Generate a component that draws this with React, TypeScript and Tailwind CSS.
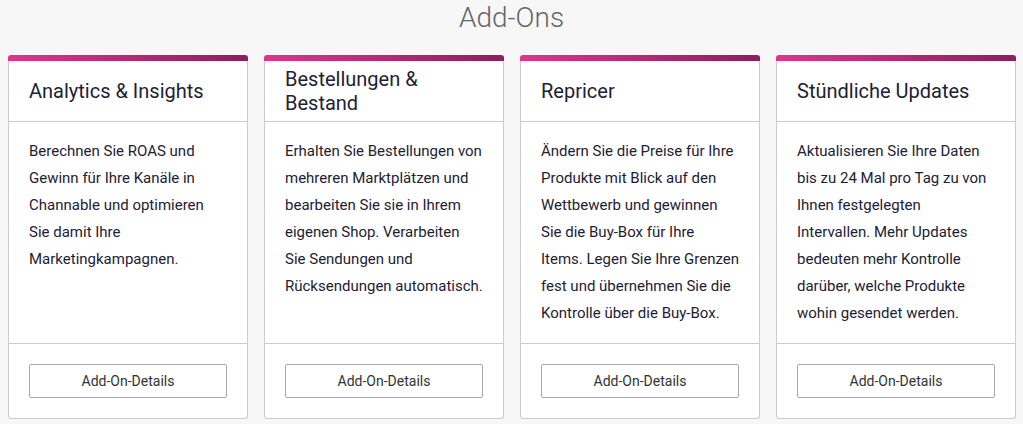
import React from "react";

const cards = [
  {
    title: "Analytics & Insights",
    lines: [
      "Berechnen Sie ROAS und",
      "Gewinn für Ihre Kanäle in",
      "Channable und optimieren",
      "Sie damit Ihre",
      "Marketingkampagnen.",
    ],
  },
  {
    title: "Bestellungen & Bestand",
    lines: [
      "Erhalten Sie Bestellungen von",
      "mehreren Marktplätzen und",
      "bearbeiten Sie sie in Ihrem",
      "eigenen Shop. Verarbeiten",
      "Sie Sendungen und",
      "Rücksendungen automatisch.",
    ],
  },
  {
    title: "Repricer",
    lines: [
      "Ändern Sie die Preise für Ihre",
      "Produkte mit Blick auf den",
      "Wettbewerb und gewinnen",
      "Sie die Buy-Box für Ihre",
      "Items. Legen Sie Ihre Grenzen",
      "fest und übernehmen Sie die",
      "Kontrolle über die Buy-Box.",
    ],
  },
  {
    title: "Stündliche Updates",
    lines: [
      "Aktualisieren Sie Ihre Daten",
      "bis zu 24 Mal pro Tag zu von",
      "Ihnen festgelegten",
      "Intervallen. Mehr Updates",
      "bedeuten mehr Kontrolle",
      "darüber, welche Produkte",
      "wohin gesendet werden.",
    ],
  },
];

export default function App() {
  return (
    <div
      className="min-h-[424px] w-full bg-[#f7f7f7] px-2"
      style={{ fontFamily: "Roboto, 'Noto Sans', sans-serif" }}
    >
      <h1 className="h-[36px] text-center text-[28px] font-light leading-[36px] text-[#666666]">
        Add-Ons
      </h1>
      <div className="mt-[19px] grid grid-cols-[repeat(4,240px)] gap-4">
        {cards.map((c) => (
          <div key={c.title} className="flex flex-col">
            <div className="h-[6px] rounded-t-[3px] bg-gradient-to-r from-[#e0358b] to-[#8d1e5d]" />
            <div className="flex flex-1 flex-col rounded-b-[3px] border-x border-b border-[#cccccc] bg-white">
              <div className="flex h-[61px] items-center border-b border-[#cccccc] pl-5 pr-6">
                <h2 className="text-[20px] leading-[24px] text-[#1d2233]">{c.title}</h2>
              </div>
              <div className="flex-1 border-b border-[#cccccc] pl-5 pr-3 pt-4 pb-4">
                <p className="whitespace-nowrap text-[15px] leading-[27px] text-[#1d2233]">
                  {c.lines.map((l, i) => (
                    <React.Fragment key={i}>
                      {l}
                      {i < c.lines.length - 1 && <br />}
                    </React.Fragment>
                  ))}
                </p>
              </div>
              <div className="px-5 pt-5 pb-5">
                <button className="h-[34px] w-full rounded-[2px] border border-[#aaaaaa] bg-white text-[14px] text-[#333333]">
                  Add-On-Details
                </button>
              </div>
            </div>
          </div>
        ))}
      </div>
    </div>
  );
}
